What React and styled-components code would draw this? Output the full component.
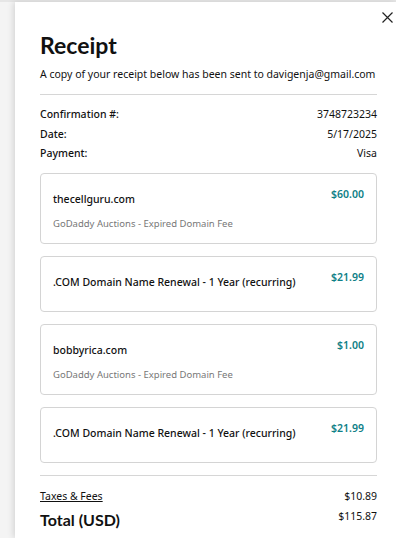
import React from 'react'
import styled, { createGlobalStyle } from 'styled-components'

const GlobalStyle = createGlobalStyle`
  html, body {
    margin: 0;
    padding: 0;
    background: #f4f4f4;
    font-family: "Noto Sans", "Liberation Sans", sans-serif;
    color: #111;
    overflow: hidden;
  }
`

const Backdrop = styled.div`
  width: 396px;
  height: 538px;
  padding: 2px 0 0 15px;
  box-sizing: border-box;
  background: linear-gradient(#e6e6e6, #e6e6e6) top / 100% 2px no-repeat, #f4f4f4;
`

const Panel = styled.div`
  position: relative;
  height: 100%;
  background: #fff;
  box-shadow: -2px 0 6px rgba(0, 0, 0, 0.12);
  padding: 26px 19px 0 25px;
  box-sizing: border-box;
`

const CloseButton = styled.button`
  position: absolute;
  top: 6px;
  right: 0;
  width: 18px;
  height: 18px;
  padding: 0;
  border: none;
  background: none;
  cursor: pointer;
  display: flex;
  align-items: center;
  justify-content: center;
`

const Heading = styled.h1`
  margin: 0;
  font-family: Lato, "Noto Sans", sans-serif;
  font-size: 23px;
  line-height: 34px;
  font-weight: 700;
  color: #111;
`

const Intro = styled.p`
  margin: 4px 0 0;
  font-size: 10.5px;
  line-height: 16px;
`

const Divider = styled.hr`
  margin: ${props => props.spacing || '12px 0 10px'};
  border: none;
  border-top: 1px solid #d6d6d6;
`

const InfoRow = styled.div`
  display: flex;
  justify-content: space-between;
  font-size: 10.5px;
  line-height: 19.5px;
`

const InfoLabel = styled.span`
  font-weight: 500;
`

const ItemList = styled.div`
  display: flex;
  flex-direction: column;
  gap: 12px;
  margin-top: 9px;
`

const Card = styled.div`
  display: flex;
  justify-content: space-between;
  align-items: flex-start;
  min-height: 56px;
  box-sizing: border-box;
  padding: 12px 12px 11px;
  border: 1px solid #d4d4d4;
  border-radius: 4px;
`

const CardBody = styled.div`
  display: flex;
  flex-direction: column;
`

const CardTitle = styled.div`
  margin-top: 4px;
  font-size: 10.5px;
  line-height: 18px;
  font-weight: 500;
`

const CardNote = styled.div`
  margin-top: 8px;
  font-size: 9.5px;
  line-height: 16px;
  color: #777;
`

const Price = styled.div`
  font-size: 10.5px;
  line-height: 16px;
  font-weight: 600;
  color: #0f7f87;
`

const SummaryRow = styled.div`
  display: flex;
  justify-content: space-between;
  align-items: flex-start;
  font-size: 10.5px;
  line-height: ${props => props.total ? '22px' : '18px'};
  margin-top: ${props => props.total ? '4px' : '0'};
`

const FeesLink = styled.a`
  color: #111;
  text-decoration: underline;
`

const TotalLabel = styled.span`
  font-family: Lato, "Noto Sans", sans-serif;
  font-size: 16px;
  font-weight: 700;
`

const TotalValue = styled.span`
  line-height: 14px;
`

const items = [
  { title: 'thecellguru.com', note: 'GoDaddy Auctions - Expired Domain Fee', price: '$60.00' },
  { title: '.COM Domain Name Renewal - 1 Year (recurring)', price: '$21.99' },
  { title: 'bobbyrica.com', note: 'GoDaddy Auctions - Expired Domain Fee', price: '$1.00' },
  { title: '.COM Domain Name Renewal - 1 Year (recurring)', price: '$21.99' }
]

const info = [
  ['Confirmation #:', '3748723234'],
  ['Date:', '5/17/2025'],
  ['Payment:', 'Visa']
]

export default function App () {
  return (
    <Backdrop>
      <GlobalStyle />
      <Panel>
        <CloseButton aria-label='Close'>
          <svg width='11' height='11' viewBox='0 0 11 11'>
            <path d='M0.5 0.5L10.5 10.5M10.5 0.5L0.5 10.5' stroke='#222' strokeWidth='1.2' />
          </svg>
        </CloseButton>
        <Heading>Receipt</Heading>
        <Intro>A copy of your receipt below has been sent to davigenja@gmail.com</Intro>
        <Divider />
        {info.map(([label, value]) => (
          <InfoRow key={label}>
            <InfoLabel>{label}</InfoLabel>
            <span>{value}</span>
          </InfoRow>
        ))}
        <ItemList>
          {items.map((item, i) => (
            <Card key={i}>
              <CardBody>
                <CardTitle>{item.title}</CardTitle>
                {item.note && <CardNote>{item.note}</CardNote>}
              </CardBody>
              <Price>{item.price}</Price>
            </Card>
          ))}
        </ItemList>
        <Divider spacing='12px 0 11px' />
        <SummaryRow>
          <FeesLink href='#'>Taxes &amp; Fees</FeesLink>
          <span>$10.89</span>
        </SummaryRow>
        <SummaryRow total>
          <TotalLabel>Total (USD)</TotalLabel>
          <TotalValue>$115.87</TotalValue>
        </SummaryRow>
      </Panel>
    </Backdrop>
  )
}
